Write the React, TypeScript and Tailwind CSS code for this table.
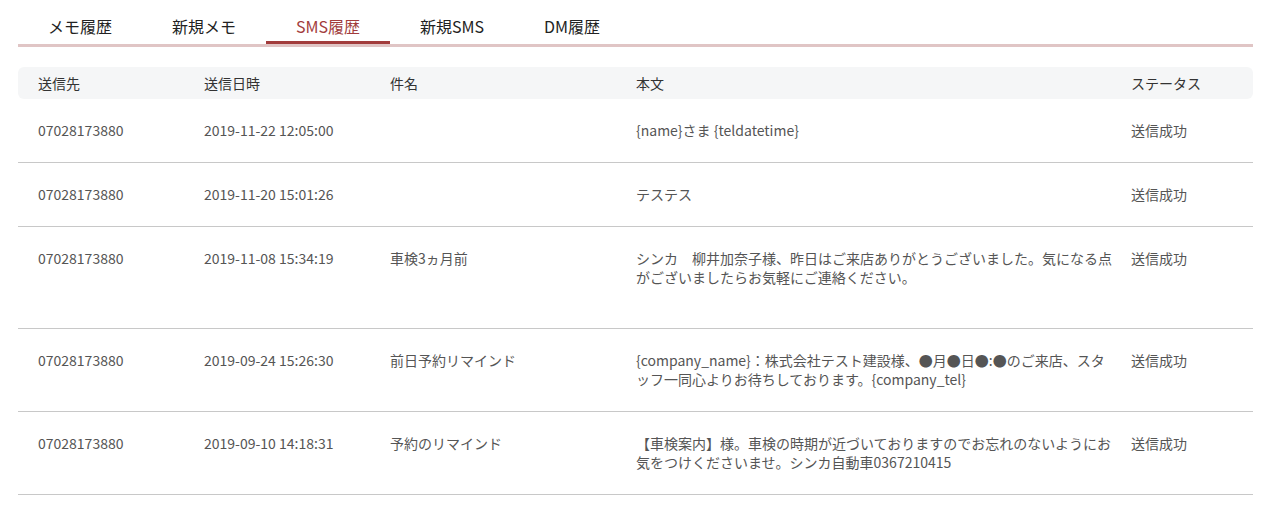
import React from 'react'

type SmsRow = {
  to: string
  sentAt: string
  subject: string
  body: string
  status: string
  extra?: boolean
}

const tabs = ['メモ履歴', '新規メモ', 'SMS履歴', '新規SMS', 'DM履歴']

const rows: SmsRow[] = [
  {
    to: '07028173880',
    sentAt: '2019-11-22 12:05:00',
    subject: '',
    body: '{name}さま {teldatetime}',
    status: '送信成功'
  },
  {
    to: '07028173880',
    sentAt: '2019-11-20 15:01:26',
    subject: '',
    body: 'テステス',
    status: '送信成功'
  },
  {
    to: '07028173880',
    sentAt: '2019-11-08 15:34:19',
    subject: '車検3ヵ月前',
    body: 'シンカ　柳井加奈子様、昨日はご来店ありがとうございました。気になる点がございましたらお気軽にご連絡ください。',
    status: '送信成功',
    extra: true
  },
  {
    to: '07028173880',
    sentAt: '2019-09-24 15:26:30',
    subject: '前日予約リマインド',
    body: '{company_name}：株式会社テスト建設様、●月●日●:●のご来店、スタッフ一同心よりお待ちしております。{company_tel}',
    status: '送信成功'
  },
  {
    to: '07028173880',
    sentAt: '2019-09-10 14:18:31',
    subject: '予約のリマインド',
    body: '【車検案内】様。車検の時期が近づいておりますのでお忘れのないようにお気をつけくださいませ。シンカ自動車0367210415',
    status: '送信成功'
  }
]

export default function App() {
  return (
    <div
      className="min-h-screen bg-white pl-[18px] pr-[10px] pt-[14px] text-[14px]"
      style={{ fontFamily: '"Noto Sans CJK JP", "Noto Sans", sans-serif' }}
    >
      {/* tabs */}
      <div className="flex border-b-[3px] border-[#e0c5c5]">
        {tabs.map((t, i) => (
          <div
            key={t}
            className={
              i === 2
                ? 'w-[124px] h-[30px] -mb-[3px] border-b-[3px] border-[#a23c3c] text-center text-[16px] leading-[24px] text-[#a23c3c]'
                : i === 4
                  ? 'w-[116px] h-[30px] text-center text-[16px] leading-[24px] text-[#222]'
                  : 'w-[124px] h-[30px] text-center text-[16px] leading-[24px] text-[#222]'
            }
          >
            {t}
          </div>
        ))}
      </div>

      {/* table */}
      <table className="mt-[20px] w-full table-fixed border-collapse">
        <colgroup>
          <col className="w-[166px]" />
          <col className="w-[186px]" />
          <col className="w-[246px]" />
          <col className="w-[505px]" />
          <col />
        </colgroup>
        <thead>
          <tr className="text-left text-[#333]">
            <th className="h-[32px] rounded-l-[6px] bg-[#f5f6f7] pl-[20px] font-normal">送信先</th>
            <th className="bg-[#f5f6f7] pl-[20px] font-normal">送信日時</th>
            <th className="bg-[#f5f6f7] pl-[20px] font-normal">件名</th>
            <th className="bg-[#f5f6f7] pl-[20px] font-normal">本文</th>
            <th className="rounded-r-[6px] bg-[#f5f6f7] pl-[10px] font-normal">ステータス</th>
          </tr>
        </thead>
        <tbody className="text-[#555]">
          {rows.map((r, i) => (
            <tr key={i} className="border-b border-[#c8c8c8] align-top leading-[19px]">
              <td className="pl-[20px] pt-[22px] pb-[22px]">{r.to}</td>
              <td className="pl-[20px] pt-[22px] pb-[22px]">{r.sentAt}</td>
              <td className="pl-[20px] pt-[22px] pb-[22px]">{r.subject}</td>
              <td className="pl-[20px] pr-[6px] pt-[22px] pb-[22px]">
                <div className={r.extra ? 'min-h-[57px]' : ''}>{r.body}</div>
              </td>
              <td className="pl-[10px] pt-[22px] pb-[22px]">{r.status}</td>
            </tr>
          ))}
        </tbody>
      </table>
    </div>
  )
}
